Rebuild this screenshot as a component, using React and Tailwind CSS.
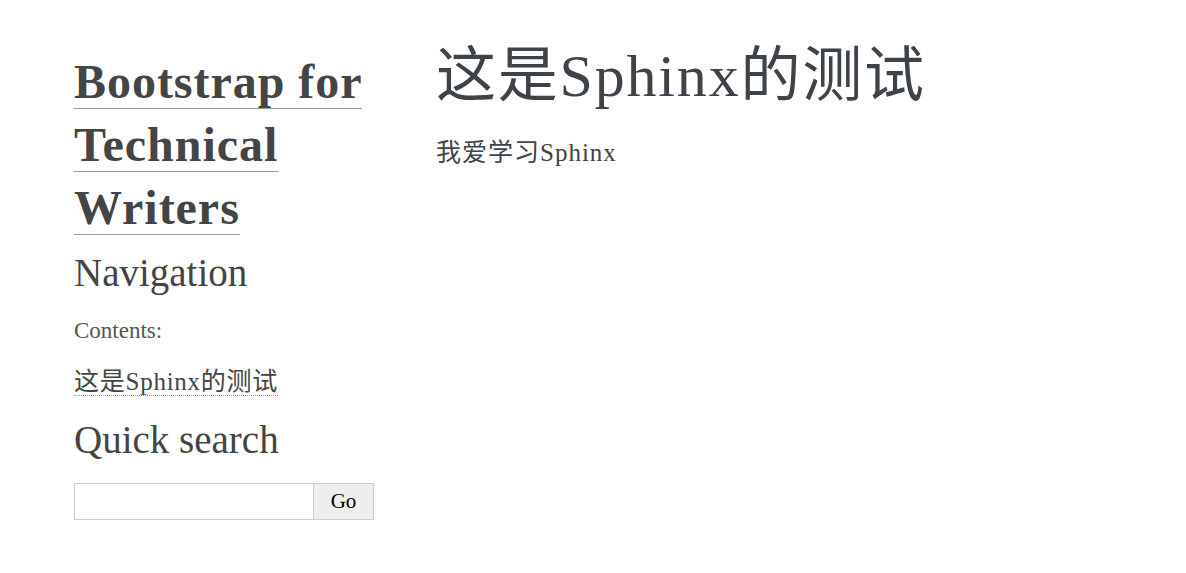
export default function App() {

  // sidebar + body, sphinx style page
  return (

    <div className="min-h-screen bg-white text-[#3E4349] font-['Liberation_Serif','Noto_Sans_CJK_SC',serif]">

      <div className="flex items-start pl-[74px] pt-[40px]">

        {/* SIDEBAR */}

        <aside className="w-[300px] shrink-0 mt-[10px]">

          <h1 className="text-[48px] leading-[63px] font-bold tracking-[0.02em] text-[#444]">
            <a href="#" className="border-b border-[#999]">
              Bootstrap for Technical Writers
            </a>
          </h1>

          <h3 className="mt-[10px] text-[39px] leading-[48px] text-[#444]">
            Navigation
          </h3>

          <p className="mt-[19px] text-[23px] leading-[30px] text-[#555]">
            Contents:
          </p>

          <ul className="mt-[20px]">
            <li className="text-[25px] leading-[32px] tracking-[0.03em]">
              <a href="#" className="border-b border-dotted border-[#999] text-[#444]">
                这是Sphinx的测试
              </a>
            </li>
          </ul>

          <h3 className="mt-[18px] text-[39px] leading-[48px] text-[#444]">
            Quick search
          </h3>

          <form className="mt-[19px] flex" onSubmit={(e) => e.preventDefault()}>
            <input
              type="text"
              className="w-[240px] h-[37px] border border-[#ccc] bg-white px-2 outline-none"
            />
            <button
              type="submit"
              className="w-[60px] h-[37px] border border-l-0 border-[#ccc] bg-[#eee] text-[21px] text-black"
            >
              Go
            </button>
          </form>

        </aside>

        {/* BODY */}

        <main className="ml-[62px]">

          <h1 className="text-[60px] leading-[72px] tracking-[0.03em] text-[#3E4349]">
            这是Sphinx的测试
          </h1>

          <p className="mt-[24px] text-[25px] leading-[34px] tracking-[0.04em]">
            我爱学习Sphinx
          </p>

        </main>

      </div>

    </div>

  );
}
